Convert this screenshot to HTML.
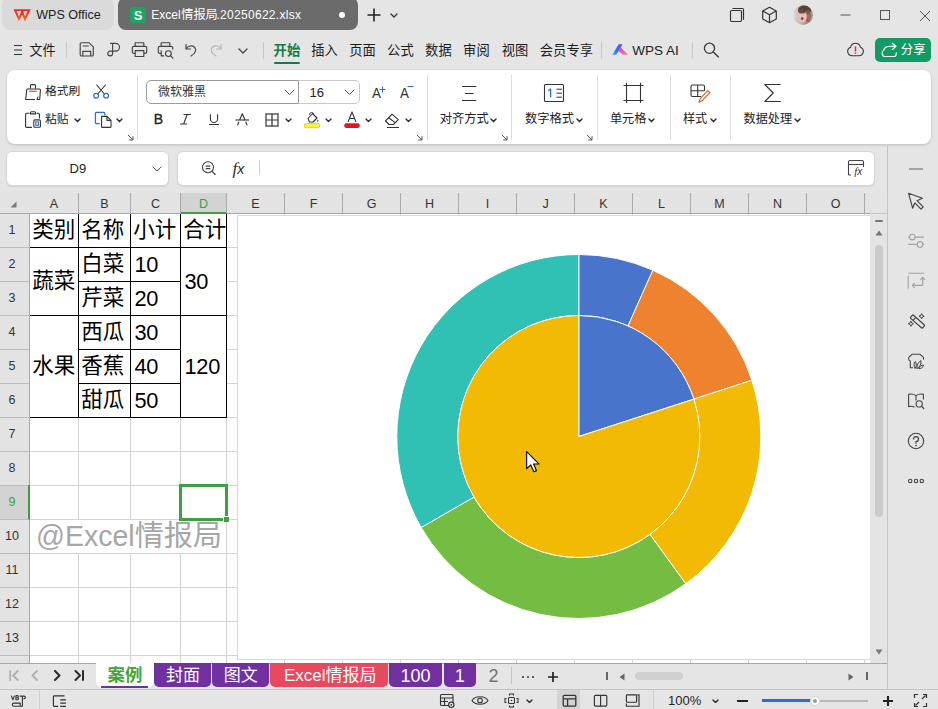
<!DOCTYPE html>
<html lang="zh"><head><meta charset="utf-8"><title>Excel情报局.20250622.xlsx - WPS Office</title>
<style>
html,body{margin:0;padding:0}
body{width:938px;height:709px;overflow:hidden;position:relative;background:#e5e5e5;font-family:"Liberation Sans",sans-serif;color:#222}
body div,body svg{position:absolute;box-sizing:border-box}
span.cj{position:static;display:inline-block;white-space:nowrap;font-family:"Liberation Sans","Noto Sans CJK SC",sans-serif}
span.cji{white-space:nowrap;font-family:"Liberation Sans","Noto Sans CJK SC",sans-serif}
.lat{position:static;display:inline}
</style></head><body>
<div style="left:2px;top:-3px;width:112px;height:33px;background:#dadada;border-radius:8px"></div>
<svg style="left:12px;top:7px;" width="20" height="15" viewBox="0 0 20 15" fill="none"><defs><linearGradient id="wlg" x1="0" y1="0" x2="0" y2="1"><stop offset="0.3" stop-color="#f5281c"/><stop offset="1" stop-color="#f7641a"/></linearGradient></defs><path d="M3 3.1 H11 L6.9 12 Z M9.6 3.1 H17.2 L12.9 12 Z" stroke="url(#wlg)" stroke-width="1.9" stroke-linejoin="miter"/></svg>
<div style="left:36.2px;top:6.725px;height:16.55px;line-height:16.55px;font-size:12.55px;color:#222;white-space:nowrap;">WPS Office</div>
<div style="left:118px;top:-3px;width:240px;height:33px;background:#6b6b6b;border-radius:8px"></div>
<div style="left:130px;top:7px;width:16px;height:16px;background:#21a366;border-radius:2px"></div>
<div style="left:133px;top:6.5px;height:17px;line-height:17px;font-size:13px;color:#fff;white-space:nowrap;font-weight:bold;width:10px;text-align:center">S</div>
<div style="left:151.3px;top:5px;height:20px;line-height:20px;font-size:12px;color:#fff;white-space:nowrap">Excel<span class="cji" style="font-size:12.2px;color:#fff;margin:0 -1.4px 0 0.6px">情报局</span><span style="letter-spacing:0.3px">.20250622.xlsx</span></div>
<div style="left:338.8px;top:11.5px;width:6px;height:6px;background:#fff;border-radius:50%"></div>
<svg style="left:366.7px;top:8px;" width="14" height="14" viewBox="0 0 14 14" fill="none"><path d="M7 0.5 V13.5 M0.5 7 H13.5" stroke="#222" stroke-width="1.6"/></svg>
<svg style="left:390.0px;top:12.5px;" width="8" height="5" viewBox="0 0 8 5" fill="none"><path d="M1 1 L4.0 4 L7 1" stroke="#333" stroke-width="1.3" stroke-linecap="round" stroke-linejoin="round"/></svg>
<svg style="left:728px;top:6px;" width="18" height="18" viewBox="0 0 18 18" fill="none"><rect x="2.5" y="4.5" width="11" height="11" rx="1.2" stroke="#333" stroke-width="1.15"/><path d="M4.5 2.5 H14.5 A1 1 0 0 1 15.5 3.5 V13.8" stroke="#333" stroke-width="1.15"/></svg>
<svg style="left:761px;top:6px;" width="17" height="18" viewBox="0 0 17 18" fill="none"><path d="M8.5 1.3 L15.3 5 V13 L8.5 16.7 L1.7 13 V5 Z M1.9 5.1 L8.5 8.8 L15.1 5.1 M8.5 8.8 V16.5" stroke="#333" stroke-width="1.2" stroke-linejoin="round"/></svg>
<svg style="left:793.3px;top:4.7px" width="20" height="20" viewBox="0 0 20 20"><defs><clipPath id="avc"><circle cx="10" cy="10" r="10"/></clipPath><linearGradient id="avg" x1="0" y1="0" x2="1" y2="0"><stop offset="0" stop-color="#dcdcda"/><stop offset="0.3" stop-color="#cdbdb4"/><stop offset="0.7" stop-color="#b08a7c"/><stop offset="1" stop-color="#9a9a90"/></linearGradient></defs><g clip-path="url(#avc)"><rect width="20" height="20" fill="url(#avg)"/><ellipse cx="11.5" cy="5" rx="6.5" ry="4.5" fill="#5b4036"/><ellipse cx="15" cy="11" rx="2.6" ry="6" fill="#7a5a4e"/><ellipse cx="9.3" cy="11.5" rx="4.6" ry="6" fill="#e2c2b2"/><ellipse cx="9" cy="6.8" rx="3.6" ry="1.8" fill="#6a4a3e"/><ellipse cx="9.2" cy="13.6" rx="1.2" ry="1.6" fill="#b02a3a"/><ellipse cx="15.5" cy="12" rx="1.6" ry="4" fill="#c56a6a" opacity="0.7"/></g></svg>
<svg style="left:839.5px;top:14px;" width="12" height="2" viewBox="0 0 12 2" fill="none"><path d="M0.5 1 H10.5" stroke="#555" stroke-width="1"/></svg>
<svg style="left:879px;top:9px;" width="12" height="12" viewBox="0 0 12 12" fill="none"><rect x="1.5" y="1.5" width="9" height="9" stroke="#555" stroke-width="1"/></svg>
<svg style="left:918.5px;top:9.5px;" width="12" height="12" viewBox="0 0 12 12" fill="none"><path d="M1 1 L11 11 M11 1 L1 11" stroke="#555" stroke-width="1"/></svg>
<svg style="left:13px;top:44px;" width="10" height="12" viewBox="0 0 10 12" fill="none"><path d="M1 1.5 H9 M1 6 H9 M1 10.5 H9" stroke="#333" stroke-width="1.2"/></svg>
<div style="left:29.4px;top:43.6px;line-height:0;"><span class="cj" style="width:26.2px;height:13.1px;line-height:13.1px;font-size:13.1px;color:#1c1c1c">文件</span></div>
<div style="left:66px;top:41.8px;width:1px;height:16.5px;background:#c8c8c8"></div>
<svg style="left:78.3px;top:41.4px;" width="17" height="17" viewBox="0 0 17 17" fill="none"><path d="M2.2 3 A1.3 1.3 0 0 1 3.5 1.7 H11 L15.3 5.8 V13.7 A1.3 1.3 0 0 1 14 15 H3.5 A1.3 1.3 0 0 1 2.2 13.7 Z" stroke="#444" stroke-width="1.15" stroke-linejoin="round"/><path d="M4.8 15 V10.3 H12.7 V15 M4.8 5 H10.8" stroke="#444" stroke-width="1.15"/></svg>
<svg style="left:105px;top:41.4px;" width="17" height="17" viewBox="0 0 17 17" fill="none"><path d="M5.5 2.4 H10.6 A3.85 3.85 0 0 1 10.6 10.1 H5.2 A2.4 2.4 0 1 0 7.6 12.5 V2.4" stroke="#444" stroke-width="1.15" stroke-linecap="round" stroke-linejoin="round"/></svg>
<svg style="left:130.5px;top:41.1px;" width="17" height="17" viewBox="0 0 17 17" fill="none"><path d="M4.2 5.3 V1.7 H12.8 V5.3 M4.2 12.3 H2.8 A1.5 1.5 0 0 1 1.3 10.8 V6.8 A1.5 1.5 0 0 1 2.8 5.3 H14.2 A1.5 1.5 0 0 1 15.7 6.8 V10.8 A1.5 1.5 0 0 1 14.2 12.3 H12.8 M4.2 9.6 H12.8 V15.5 H4.2 Z" stroke="#444" stroke-width="1.15" stroke-linejoin="round"/></svg>
<svg style="left:156.8px;top:41.1px;" width="18" height="18" viewBox="0 0 18 18" fill="none"><path d="M4.2 5.3 V1.7 H12.8 V5.3 M4.6 12.3 H2.8 A1.5 1.5 0 0 1 1.3 10.8 V6.8 A1.5 1.5 0 0 1 2.8 5.3 H14.2 A1.5 1.5 0 0 1 15.7 6.8 V8.4 M4.2 9.6 V14.8 H7.2" stroke="#444" stroke-width="1.15" stroke-linejoin="round"/><circle cx="11.4" cy="12.6" r="2.9" stroke="#444" stroke-width="1.15"/><path d="M13.6 14.8 L15.9 17.1" stroke="#444" stroke-width="1.2" stroke-linecap="round"/></svg>
<svg style="left:184px;top:43px;" width="14" height="14" viewBox="0 0 14 14" fill="none"><path d="M2 1.5 V6 H6.5" stroke="#444" stroke-width="1.2" stroke-linecap="round" stroke-linejoin="round"/><path d="M2.3 5.7 C4 3 8 1.8 10.5 4.2 C13 6.8 11.5 10.5 7 13" stroke="#444" stroke-width="1.2" stroke-linecap="round"/></svg>
<svg style="left:209px;top:43px;" width="14" height="14" viewBox="0 0 14 14" fill="none"><path d="M12 1.5 V6 H7.5" stroke="#b5b5b5" stroke-width="1.2" stroke-linecap="round" stroke-linejoin="round"/><path d="M11.7 5.7 C10 3 6 1.8 3.5 4.2 C1 6.8 2.5 10.5 7 13" stroke="#b5b5b5" stroke-width="1.2" stroke-linecap="round"/></svg>
<svg style="left:237.5px;top:48.0px;" width="10" height="6" viewBox="0 0 10 6" fill="none"><path d="M1 1 L5.0 5 L9 1" stroke="#444" stroke-width="1.3" stroke-linecap="round" stroke-linejoin="round"/></svg>
<div style="left:262.5px;top:42px;width:1px;height:16.5px;background:#c8c8c8"></div>
<div style="left:273.6px;top:44.0px;line-height:0;"><span class="cj" style="width:26.6px;height:13.3px;line-height:13.3px;font-size:13.3px;color:#127d45;font-weight:bold">开始</span></div>
<div style="left:273.5px;top:61.5px;width:26.5px;height:2.2px;background:#127d45;border-radius:1px"></div>
<div style="left:311.3px;top:44.0px;line-height:0;"><span class="cj" style="width:26.6px;height:13.3px;line-height:13.3px;font-size:13.3px;color:#1c1c1c">插入</span></div>
<div style="left:349.3px;top:44.0px;line-height:0;"><span class="cj" style="width:26.6px;height:13.3px;line-height:13.3px;font-size:13.3px;color:#1c1c1c">页面</span></div>
<div style="left:387.1px;top:44.0px;line-height:0;"><span class="cj" style="width:26.6px;height:13.3px;line-height:13.3px;font-size:13.3px;color:#1c1c1c">公式</span></div>
<div style="left:425.1px;top:44.0px;line-height:0;"><span class="cj" style="width:26.6px;height:13.3px;line-height:13.3px;font-size:13.3px;color:#1c1c1c">数据</span></div>
<div style="left:463.1px;top:44.0px;line-height:0;"><span class="cj" style="width:26.6px;height:13.3px;line-height:13.3px;font-size:13.3px;color:#1c1c1c">审阅</span></div>
<div style="left:501.8px;top:44.0px;line-height:0;"><span class="cj" style="width:26.6px;height:13.3px;line-height:13.3px;font-size:13.3px;color:#1c1c1c">视图</span></div>
<div style="left:539.8px;top:44.0px;line-height:0;"><span class="cj" style="width:53.2px;height:13.3px;line-height:13.3px;font-size:13.3px;color:#1c1c1c">会员专享</span></div>
<div style="left:601px;top:41.5px;width:1px;height:16px;background:#c8c8c8"></div>
<svg style="left:610px;top:42px" width="20" height="15" viewBox="610 42 20 15"><defs><linearGradient id="aib" x1="0" y1="1" x2="1" y2="0"><stop offset="0" stop-color="#2fb4ff"/><stop offset="0.45" stop-color="#2f6bff"/><stop offset="1" stop-color="#6a45f5"/></linearGradient><linearGradient id="aip" x1="0" y1="0" x2="1" y2="1"><stop offset="0" stop-color="#d836e6"/><stop offset="1" stop-color="#ff8a78"/></linearGradient></defs><path d="M612.3 54.8 L618.7 44.2 H622.6 L616.2 54.8 Z" fill="url(#aib)"/><path d="M620.6 47.6 L628.2 54.8 H623.2 L618.4 50.9 Z" fill="url(#aip)"/></svg>
<div style="left:632.3px;top:41.65px;height:17.5px;line-height:17.5px;font-size:13.5px;color:#222;white-space:nowrap;">WPS AI</div>
<div style="left:692px;top:41.5px;width:1px;height:16px;background:#c8c8c8"></div>
<svg style="left:702.9px;top:41.4px;" width="17" height="17" viewBox="0 0 17 17" fill="none"><circle cx="6.5" cy="7.3" r="5.1" stroke="#3a3a3a" stroke-width="1.3"/><path d="M10.3 11 L15.4 16" stroke="#3a3a3a" stroke-width="1.3" stroke-linecap="round"/></svg>
<svg style="left:846.5px;top:42.1px;" width="17" height="15" viewBox="0 0 17 15" fill="none"><path d="M8.5 1.2 C11.2 1.2 12.9 3 13.4 5.2 C15.6 6 16.6 7.8 16.3 9.9 C15.9 12.3 14.2 13.7 11.8 13.7 H5.2 C2.8 13.7 1.1 12.3 0.7 9.9 C0.4 7.8 1.4 6 3.6 5.2 C4.1 3 5.8 1.2 8.5 1.2 Z" stroke="#3a3a3a" stroke-width="1.1"/><path d="M8.5 4.4 V9.4" stroke="#e8283c" stroke-width="1.5"/><circle cx="8.5" cy="11" r="0.85" fill="#e8283c"/></svg>
<div style="left:875px;top:38px;width:56px;height:24px;background:#129b64;border-radius:5px"></div>
<svg style="left:880px;top:40px;" width="20" height="20" viewBox="0 0 20 20" fill="none"><path d="M2.3 11.3 V14 A2.5 2.5 0 0 0 4.8 16.5 H13.7 A2.5 2.5 0 0 0 16.2 14 V12.8" stroke="#fff" stroke-width="1.15" stroke-linecap="round"/><path d="M3.7 10.6 C4 7.6 6.6 6.3 9.5 6.3 H15.6 M12.3 3.2 L16 6.3 L12.4 9.5" stroke="#fff" stroke-width="1.15" stroke-linecap="round" stroke-linejoin="round"/></svg>
<div style="left:900.8px;top:43.5px;line-height:0;"><span class="cj" style="width:24.8px;height:12.4px;line-height:12.4px;font-size:12.4px;color:#fff">分享</span></div>
<div style="left:7px;top:69.6px;width:924px;height:74.4px;background:#fff;border-radius:8px;box-shadow:0 1px 3px rgba(0,0,0,0.18)"></div>
<div style="left:137px;top:74.5px;width:1px;height:65px;background:#dcdcdc"></div>
<div style="left:426.5px;top:74.5px;width:1px;height:65px;background:#dcdcdc"></div>
<div style="left:511px;top:74.5px;width:1px;height:65px;background:#dcdcdc"></div>
<div style="left:596.5px;top:74.5px;width:1px;height:65px;background:#dcdcdc"></div>
<div style="left:669.5px;top:74.5px;width:1px;height:65px;background:#dcdcdc"></div>
<div style="left:730px;top:74.5px;width:1px;height:65px;background:#dcdcdc"></div>
<svg style="left:24px;top:83px;" width="18" height="18" viewBox="0 0 18 18" fill="none"><path d="M6.5 5.8 V2.6 A1 1 0 0 1 7.5 1.6 H10.5 A1 1 0 0 1 11.5 2.6 V5.8" stroke="#333" stroke-width="1.1"/><path d="M11 16.5 H1.7 L2.7 6.9 A1 1 0 0 1 3.7 6 H15.4 A1 1 0 0 1 16.4 7.1 L15.7 16.5 H13.2 C13.2 15 13.6 14.2 14.3 13.6" stroke="#333" stroke-width="1.1" stroke-linejoin="round"/><path d="M5.2 8.3 H12.8" stroke="#d9541e" stroke-width="1.2"/></svg>
<div style="left:45px;top:86px;line-height:0;"><span class="cj" style="width:35.4px;height:11.8px;line-height:11.8px;font-size:11.8px;color:#222">格式刷</span></div>
<svg style="left:92px;top:83px;" width="18" height="18" viewBox="0 0 18 18" fill="none"><path d="M4.8 2 L12.4 11 M13.4 2 L5.8 11" stroke="#333" stroke-width="1.1" stroke-linecap="round"/><circle cx="4.1" cy="12.8" r="2.4" stroke="#2b6fd6" stroke-width="1.2"/><circle cx="14.1" cy="12.8" r="2.4" stroke="#2b6fd6" stroke-width="1.2"/></svg>
<svg style="left:24px;top:110px;" width="18" height="19" viewBox="0 0 18 19" fill="none"><path d="M6.4 3.9 V2.8 A1 1 0 0 1 7.4 1.8 H10.6 A1 1 0 0 1 11.6 2.8 V3.9 Z" stroke="#333" stroke-width="1.1" stroke-linejoin="round"/><path d="M5 3.3 H2.6 A1 1 0 0 0 1.6 4.3 V16.4 A1 1 0 0 0 2.6 17.4 H7.6 M13 3.3 H14.4 A1 1 0 0 1 15.4 4.3 V8" stroke="#333" stroke-width="1.1" stroke-linecap="round"/><rect x="9.8" y="9.9" width="6.6" height="7.3" rx="1" stroke="#333" stroke-width="1.1"/><rect x="11.8" y="11.8" width="2.6" height="3.5" stroke="#2b6fd6" stroke-width="1.1"/></svg>
<div style="left:45px;top:113.5px;line-height:0;"><span class="cj" style="width:23.6px;height:11.8px;line-height:11.8px;font-size:11.8px;color:#222">粘贴</span></div>
<svg style="left:73.5px;top:118.2px;" width="7" height="4.6" viewBox="0 0 7 4.6" fill="none"><path d="M1 1 L3.5 3.6 L6 1" stroke="#333" stroke-width="1.5" stroke-linecap="round" stroke-linejoin="round"/></svg>
<svg style="left:94px;top:110px;" width="18" height="19" viewBox="0 0 18 19" fill="none"><path d="M10.8 5.4 V3.4 A1 1 0 0 0 9.8 2.4 H2.4 A1 1 0 0 0 1.4 3.4 V12.5 A1 1 0 0 0 2.4 13.5 H5.8" stroke="#2b6fd6" stroke-width="1.25"/><path d="M7.6 6.4 H13 L17 10.4 V16.4 A1 1 0 0 1 16 17.4 H8.6 A1 1 0 0 1 7.6 16.4 Z M13 6.6 V10.4 H16.8" stroke="#333" stroke-width="1.1" stroke-linejoin="round"/></svg>
<svg style="left:115.5px;top:118.2px;" width="7" height="4.6" viewBox="0 0 7 4.6" fill="none"><path d="M1 1 L3.5 3.6 L6 1" stroke="#333" stroke-width="1.5" stroke-linecap="round" stroke-linejoin="round"/></svg>
<svg style="left:126.5px;top:134.0px;" width="7" height="7" viewBox="0 0 7 7" fill="none"><path d="M1 1 L6 6 M6 2.2 V6 H2.2" stroke="#555" stroke-width="1"/></svg>
<svg style="left:416.0px;top:134.0px;" width="7" height="7" viewBox="0 0 7 7" fill="none"><path d="M1 1 L6 6 M6 2.2 V6 H2.2" stroke="#555" stroke-width="1"/></svg>
<svg style="left:500.5px;top:134.0px;" width="7" height="7" viewBox="0 0 7 7" fill="none"><path d="M1 1 L6 6 M6 2.2 V6 H2.2" stroke="#555" stroke-width="1"/></svg>
<svg style="left:585.5px;top:134.0px;" width="7" height="7" viewBox="0 0 7 7" fill="none"><path d="M1 1 L6 6 M6 2.2 V6 H2.2" stroke="#555" stroke-width="1"/></svg>
<div style="left:146px;top:80px;width:153px;height:24px;border:1px solid #9b9b9b;border-radius:5px 0 0 5px;background:#fff"></div>
<div style="left:298px;top:80px;width:62px;height:24px;border:1px solid #c9c9c9;border-left:1px solid #9b9b9b;border-radius:0 5px 5px 0;background:#fff"></div>
<div style="left:158px;top:86.3px;line-height:0;"><span class="cj" style="width:48px;height:12px;line-height:12px;font-size:12px;color:#333">微软雅黑</span></div>
<svg style="left:283.5px;top:89.25px;" width="11" height="6.5" viewBox="0 0 11 6.5" fill="none"><path d="M1 1 L5.5 5.5 L10 1" stroke="#555" stroke-width="1" stroke-linecap="round" stroke-linejoin="round"/></svg>
<div style="left:309.5px;top:84.0px;height:17px;line-height:17px;font-size:13px;color:#222;white-space:nowrap;">16</div>
<svg style="left:343.5px;top:89.25px;" width="11" height="6.5" viewBox="0 0 11 6.5" fill="none"><path d="M1 1 L5.5 5.5 L10 1" stroke="#555" stroke-width="1" stroke-linecap="round" stroke-linejoin="round"/></svg>
<div style="left:372px;top:83.2px;height:19.2px;line-height:19.2px;font-size:15.2px;color:#333;white-space:nowrap;transform:scaleX(0.88);transform-origin:left">A</div>
<svg style="left:379.4px;top:85.5px;" width="7" height="7" viewBox="0 0 7 7" fill="none"><path d="M3.5 0.5 V6.5 M0.5 3.5 H6.5" stroke="#2b6fd6" stroke-width="1"/></svg>
<div style="left:400.4px;top:83.2px;height:19.2px;line-height:19.2px;font-size:15.2px;color:#333;white-space:nowrap;transform:scaleX(0.88);transform-origin:left">A</div>
<svg style="left:407.2px;top:85.2px;" width="7" height="7" viewBox="0 0 7 7" fill="none"><path d="M0.5 1.5 H6.5" stroke="#2b6fd6" stroke-width="1"/></svg>
<div style="left:152.9px;top:110.3px;height:18px;line-height:18px;font-size:14px;color:#222;white-space:nowrap;-webkit-text-stroke:0.35px #222;width:11px;text-align:center">B</div>
<svg style="left:179px;top:113px;" width="13" height="13" viewBox="0 0 13 13" fill="none"><path d="M4.5 1.5 H11.9 M1 11 H8.2 M8.2 1.5 L4.6 11" stroke="#333" stroke-width="1.1"/></svg>
<svg style="left:207px;top:113px;" width="14" height="13" viewBox="0 0 14 13" fill="none"><path d="M3.4 1.2 V5.9 A3.6 3.6 0 0 0 10.6 5.9 V1.2 M2 11.5 H11.8" stroke="#333" stroke-width="1.1"/></svg>
<svg style="left:235px;top:113px;" width="15" height="14" viewBox="0 0 15 14" fill="none"><path d="M4.6 7 L7.3 0.8 L10 7 M3.9 8.8 L2.5 12.4 M10.7 8.8 L12.1 12.4" stroke="#333" stroke-width="1.1" stroke-linejoin="round"/><path d="M0.6 7 H14" stroke="#333" stroke-width="1.1"/></svg>
<svg style="left:264.5px;top:112.6px;" width="14" height="14" viewBox="0 0 14 14" fill="none"><rect x="1" y="1" width="12" height="12" stroke="#333" stroke-width="1.2"/><path d="M7 1 V13 M1 7 H13" stroke="#333" stroke-width="1.2"/></svg>
<svg style="left:285.0px;top:118.2px;" width="7" height="4.6" viewBox="0 0 7 4.6" fill="none"><path d="M1 1 L3.5 3.6 L6 1" stroke="#333" stroke-width="1.4" stroke-linecap="round" stroke-linejoin="round"/></svg>
<svg style="left:303px;top:110px;" width="18" height="19" viewBox="0 0 18 19" fill="none"><path d="M5 8.5 L9.5 3.5 L14 8 L10 12 H6.5 Z" stroke="#333" stroke-width="1.1" stroke-linejoin="round"/><path d="M6.5 4.8 C6.5 2.2 10 1.5 10.5 4" stroke="#333" stroke-width="1"/><path d="M14.8 9.5 C15.6 10.6 15.6 11.6 14.8 11.9 C14 11.6 14 10.6 14.8 9.5 Z" fill="#333"/><rect x="1.2" y="13.4" width="15.6" height="4.4" rx="2.2" fill="#fff23a" stroke="#d9b800" stroke-width="0.7"/></svg>
<svg style="left:325.0px;top:118.2px;" width="7" height="4.6" viewBox="0 0 7 4.6" fill="none"><path d="M1 1 L3.5 3.6 L6 1" stroke="#333" stroke-width="1.4" stroke-linecap="round" stroke-linejoin="round"/></svg>
<svg style="left:343px;top:110px;" width="18" height="19" viewBox="0 0 18 19" fill="none"><path d="M5 12 L9 2 L13 12 M6.4 8.5 H11.6" stroke="#333" stroke-width="1.1" stroke-linejoin="round"/><rect x="1.2" y="13.3" width="15.6" height="4.6" rx="2.2" fill="#e5141b"/></svg>
<svg style="left:364.5px;top:118.2px;" width="7" height="4.6" viewBox="0 0 7 4.6" fill="none"><path d="M1 1 L3.5 3.6 L6 1" stroke="#333" stroke-width="1.4" stroke-linecap="round" stroke-linejoin="round"/></svg>
<svg style="left:383px;top:112px;" width="18" height="17" viewBox="0 0 18 17" fill="none"><path d="M2.5 9 L9 2.2 L15.3 7.6 L10.5 12.5 H6 Z" stroke="#333" stroke-width="1.1" stroke-linejoin="round"/><path d="M5.5 5.8 L12.3 10.6 M4 15.5 H16" stroke="#333" stroke-width="1.1"/></svg>
<svg style="left:404.5px;top:118.2px;" width="7" height="4.6" viewBox="0 0 7 4.6" fill="none"><path d="M1 1 L3.5 3.6 L6 1" stroke="#333" stroke-width="1.4" stroke-linecap="round" stroke-linejoin="round"/></svg>
<svg style="left:461px;top:85px;" width="17" height="17" viewBox="0 0 17 17" fill="none"><path d="M1 1.5 H15.3 M3.8 8.5 H12.5 M1 15.5 H15.3" stroke="#333" stroke-width="1.05"/></svg>
<div style="left:439.8px;top:113.4px;line-height:0;"><span class="cj" style="width:49px;height:12.25px;line-height:12.25px;font-size:12.25px;color:#222">对齐方式</span></div>
<svg style="left:490.1px;top:118.2px;" width="7" height="4.6" viewBox="0 0 7 4.6" fill="none"><path d="M1 1 L3.5 3.6 L6 1" stroke="#333" stroke-width="1.5" stroke-linecap="round" stroke-linejoin="round"/></svg>
<svg style="left:543px;top:83px;" width="22" height="20" viewBox="0 0 22 20" fill="none"><rect x="1.5" y="1.5" width="19" height="17" rx="1" stroke="#333" stroke-width="1.1"/><path d="M13.4 6.2 H19 M13.4 10.2 H19 M13.4 14.2 H19" stroke="#333" stroke-width="1"/><path d="M5.2 7.6 L7.6 6 V14.6" stroke="#2b6fd6" stroke-width="1.3" stroke-linejoin="round"/></svg>
<div style="left:525px;top:113.4px;line-height:0;"><span class="cj" style="width:49px;height:12.25px;line-height:12.25px;font-size:12.25px;color:#222">数字格式</span></div>
<svg style="left:575.5px;top:118.2px;" width="7" height="4.6" viewBox="0 0 7 4.6" fill="none"><path d="M1 1 L3.5 3.6 L6 1" stroke="#333" stroke-width="1.5" stroke-linecap="round" stroke-linejoin="round"/></svg>
<svg style="left:622px;top:82px;" width="22" height="22" viewBox="0 0 22 22" fill="none"><path d="M4.5 0.7 V20.9 M18.5 0.7 V20.9 M1.5 3.5 H21.5 M1.5 18.5 H21.5" stroke="#333" stroke-width="1.1"/></svg>
<div style="left:609.9px;top:113.4px;line-height:0;"><span class="cj" style="width:36.45px;height:12.15px;line-height:12.15px;font-size:12.15px;color:#222">单元格</span></div>
<svg style="left:648.3px;top:118.2px;" width="7" height="4.6" viewBox="0 0 7 4.6" fill="none"><path d="M1 1 L3.5 3.6 L6 1" stroke="#333" stroke-width="1.5" stroke-linecap="round" stroke-linejoin="round"/></svg>
<svg style="left:688.8px;top:83.2px;" width="22" height="21" viewBox="0 0 22 21" fill="none"><path d="M12 13.5 H3.5 A1.5 1.5 0 0 1 2 12 V3.5 A1.5 1.5 0 0 1 3.5 2 H14 A1.5 1.5 0 0 1 15.5 3.5 V8 M2 7.8 H15.5 M8.7 2 V13.5" stroke="#333" stroke-width="1.1"/><path d="M18.8 7.6 L20.8 9.6 L13.3 17.6 L10 19.2 L11.2 15.6 Z" stroke="#dd5a1e" stroke-width="1.1" stroke-linejoin="round"/></svg>
<div style="left:682.9px;top:113.4px;line-height:0;"><span class="cj" style="width:24.3px;height:12.15px;line-height:12.15px;font-size:12.15px;color:#222">样式</span></div>
<svg style="left:709.7px;top:118.2px;" width="7" height="4.6" viewBox="0 0 7 4.6" fill="none"><path d="M1 1 L3.5 3.6 L6 1" stroke="#333" stroke-width="1.5" stroke-linecap="round" stroke-linejoin="round"/></svg>
<svg style="left:763px;top:82px;" width="20" height="21" viewBox="0 0 20 21" fill="none"><path d="M17.6 2.5 H1.8 L10.2 11 L1.8 19.5 H17.8" stroke="#333" stroke-width="1.1" stroke-linejoin="round"/></svg>
<div style="left:743.6px;top:113.4px;line-height:0;"><span class="cj" style="width:48.6px;height:12.15px;line-height:12.15px;font-size:12.15px;color:#222">数据处理</span></div>
<svg style="left:794.3px;top:118.2px;" width="7" height="4.6" viewBox="0 0 7 4.6" fill="none"><path d="M1 1 L3.5 3.6 L6 1" stroke="#333" stroke-width="1.5" stroke-linecap="round" stroke-linejoin="round"/></svg>
<div style="left:6.2px;top:151.2px;width:163px;height:34.4px;background:#fff;border-radius:6px;border:1px solid #d6d6d6;box-shadow:0 1px 1px rgba(0,0,0,0.08)"></div>
<div style="left:176.6px;top:151.2px;width:698px;height:34.4px;background:#fff;border-radius:6px;border:1px solid #d6d6d6;box-shadow:0 1px 1px rgba(0,0,0,0.08)"></div>
<div style="left:69.5px;top:160.0px;height:17px;line-height:17px;font-size:13px;color:#222;white-space:nowrap;">D9</div>
<svg style="left:151.5px;top:166.0px;" width="10" height="6" viewBox="0 0 10 6" fill="none"><path d="M1 1 L5.0 5 L9 1" stroke="#555" stroke-width="1" stroke-linecap="round" stroke-linejoin="round"/></svg>
<svg style="left:201px;top:160px;" width="17" height="17" viewBox="0 0 17 17" fill="none"><circle cx="7" cy="7.3" r="5.5" stroke="#3a3a3a" stroke-width="1.05"/><path d="M4.7 6.1 H9.3 M4.7 8.6 H9.3" stroke="#3a3a3a" stroke-width="1.05"/><path d="M11.1 11.4 L14.2 14.5" stroke="#3a3a3a" stroke-width="1.15" stroke-linecap="round"/></svg>
<div style="left:232.6px;top:158.5px;height:20px;line-height:20px;font-size:17px;color:#2e2e2e;font-family:'Liberation Serif',serif;font-style:italic;white-space:nowrap">f<span style="font-size:14px;font-family:'Liberation Sans',sans-serif;">x</span></div>
<div style="left:259px;top:160px;width:1px;height:15px;background:#d0d0d0"></div>
<svg style="left:847px;top:159px;" width="18" height="18" viewBox="0 0 18 18" fill="none"><path d="M1.5 16 V3 A1.5 1.5 0 0 1 3 1.5 H15 A1.5 1.5 0 0 1 16.5 3 V8 M1.5 5.5 H16.5 M1.5 16 H4" stroke="#444" stroke-width="1.1"/></svg>
<div style="left:854.2px;top:165px;height:13px;line-height:13px;font-size:11px;color:#333;font-family:'Liberation Serif',serif;font-style:italic;white-space:nowrap">f<span style="font-size:10px;font-family:'Liberation Sans',sans-serif;">x</span></div>
<div style="left:0px;top:193px;width:887px;height:470px;background:#fff"></div>
<div style="left:0px;top:193px;width:887px;height:20px;background:#e3e3e3"></div>
<div style="left:0px;top:213px;width:870px;height:1px;background:#a8a8a8"></div>
<div style="left:0px;top:214px;width:29px;height:449px;background:#e3e3e3"></div>
<div style="left:29px;top:213px;width:1px;height:450px;background:#a8a8a8"></div>
<svg style="left:9.5px;top:200.5px;" width="7" height="7" viewBox="0 0 7 7" fill="none"><path d="M6.5 0.5 V6.5 H0.5 Z" fill="#7a7a7a"/></svg>
<div style="left:30px;top:195.85px;height:16.5px;line-height:16.5px;font-size:12.5px;color:#333;white-space:nowrap;width:48px;text-align:center">A</div>
<div style="left:79px;top:195.85px;height:16.5px;line-height:16.5px;font-size:12.5px;color:#333;white-space:nowrap;width:51px;text-align:center">B</div>
<div style="left:131px;top:195.85px;height:16.5px;line-height:16.5px;font-size:12.5px;color:#333;white-space:nowrap;width:49px;text-align:center">C</div>
<div style="left:181px;top:193px;width:45px;height:20px;background:#d3d3d3"></div>
<div style="left:181px;top:212px;width:46px;height:2px;background:#3da142"></div>
<div style="left:181px;top:195.85px;height:16.5px;line-height:16.5px;font-size:12.5px;color:#3da142;white-space:nowrap;width:45px;text-align:center">D</div>
<div style="left:227px;top:195.85px;height:16.5px;line-height:16.5px;font-size:12.5px;color:#333;white-space:nowrap;width:57px;text-align:center">E</div>
<div style="left:285px;top:195.85px;height:16.5px;line-height:16.5px;font-size:12.5px;color:#333;white-space:nowrap;width:57px;text-align:center">F</div>
<div style="left:343px;top:195.85px;height:16.5px;line-height:16.5px;font-size:12.5px;color:#333;white-space:nowrap;width:57px;text-align:center">G</div>
<div style="left:401px;top:195.85px;height:16.5px;line-height:16.5px;font-size:12.5px;color:#333;white-space:nowrap;width:57px;text-align:center">H</div>
<div style="left:459px;top:195.85px;height:16.5px;line-height:16.5px;font-size:12.5px;color:#333;white-space:nowrap;width:57px;text-align:center">I</div>
<div style="left:517px;top:195.85px;height:16.5px;line-height:16.5px;font-size:12.5px;color:#333;white-space:nowrap;width:57px;text-align:center">J</div>
<div style="left:575px;top:195.85px;height:16.5px;line-height:16.5px;font-size:12.5px;color:#333;white-space:nowrap;width:57px;text-align:center">K</div>
<div style="left:633px;top:195.85px;height:16.5px;line-height:16.5px;font-size:12.5px;color:#333;white-space:nowrap;width:57px;text-align:center">L</div>
<div style="left:691px;top:195.85px;height:16.5px;line-height:16.5px;font-size:12.5px;color:#333;white-space:nowrap;width:57px;text-align:center">M</div>
<div style="left:749px;top:195.85px;height:16.5px;line-height:16.5px;font-size:12.5px;color:#333;white-space:nowrap;width:57px;text-align:center">N</div>
<div style="left:807px;top:195.85px;height:16.5px;line-height:16.5px;font-size:12.5px;color:#333;white-space:nowrap;width:57px;text-align:center">O</div>
<div style="left:78px;top:193px;width:1px;height:20px;background:#a8a8a8"></div>
<div style="left:130px;top:193px;width:1px;height:20px;background:#a8a8a8"></div>
<div style="left:180px;top:193px;width:1px;height:20px;background:#a8a8a8"></div>
<div style="left:226px;top:193px;width:1px;height:20px;background:#a8a8a8"></div>
<div style="left:284px;top:193px;width:1px;height:20px;background:#a8a8a8"></div>
<div style="left:342px;top:193px;width:1px;height:20px;background:#a8a8a8"></div>
<div style="left:400px;top:193px;width:1px;height:20px;background:#a8a8a8"></div>
<div style="left:458px;top:193px;width:1px;height:20px;background:#a8a8a8"></div>
<div style="left:516px;top:193px;width:1px;height:20px;background:#a8a8a8"></div>
<div style="left:574px;top:193px;width:1px;height:20px;background:#a8a8a8"></div>
<div style="left:632px;top:193px;width:1px;height:20px;background:#a8a8a8"></div>
<div style="left:690px;top:193px;width:1px;height:20px;background:#a8a8a8"></div>
<div style="left:748px;top:193px;width:1px;height:20px;background:#a8a8a8"></div>
<div style="left:806px;top:193px;width:1px;height:20px;background:#a8a8a8"></div>
<div style="left:864px;top:193px;width:1px;height:20px;background:#a8a8a8"></div>
<div style="left:0px;top:222.05px;height:16.5px;line-height:16.5px;font-size:12.5px;color:#333;white-space:nowrap;width:24px;text-align:center">1</div>
<div style="left:0px;top:247px;width:29px;height:1px;background:#bcbcbc"></div>
<div style="left:0px;top:256.05px;height:16.5px;line-height:16.5px;font-size:12.5px;color:#333;white-space:nowrap;width:24px;text-align:center">2</div>
<div style="left:0px;top:281px;width:29px;height:1px;background:#bcbcbc"></div>
<div style="left:0px;top:290.05px;height:16.5px;line-height:16.5px;font-size:12.5px;color:#333;white-space:nowrap;width:24px;text-align:center">3</div>
<div style="left:0px;top:315px;width:29px;height:1px;background:#bcbcbc"></div>
<div style="left:0px;top:324.05px;height:16.5px;line-height:16.5px;font-size:12.5px;color:#333;white-space:nowrap;width:24px;text-align:center">4</div>
<div style="left:0px;top:349px;width:29px;height:1px;background:#bcbcbc"></div>
<div style="left:0px;top:358.05px;height:16.5px;line-height:16.5px;font-size:12.5px;color:#333;white-space:nowrap;width:24px;text-align:center">5</div>
<div style="left:0px;top:383px;width:29px;height:1px;background:#bcbcbc"></div>
<div style="left:0px;top:392.05px;height:16.5px;line-height:16.5px;font-size:12.5px;color:#333;white-space:nowrap;width:24px;text-align:center">6</div>
<div style="left:0px;top:417px;width:29px;height:1px;background:#bcbcbc"></div>
<div style="left:0px;top:426.05px;height:16.5px;line-height:16.5px;font-size:12.5px;color:#333;white-space:nowrap;width:24px;text-align:center">7</div>
<div style="left:0px;top:451px;width:29px;height:1px;background:#bcbcbc"></div>
<div style="left:0px;top:460.05px;height:16.5px;line-height:16.5px;font-size:12.5px;color:#333;white-space:nowrap;width:24px;text-align:center">8</div>
<div style="left:0px;top:485px;width:29px;height:1px;background:#bcbcbc"></div>
<div style="left:0px;top:486px;width:29px;height:33px;background:#d3d3d3"></div>
<div style="left:28px;top:485px;width:2px;height:35px;background:#3da142"></div>
<div style="left:0px;top:494.05px;height:16.5px;line-height:16.5px;font-size:12.5px;color:#3da142;white-space:nowrap;width:24px;text-align:center">9</div>
<div style="left:0px;top:519px;width:29px;height:1px;background:#bcbcbc"></div>
<div style="left:0px;top:528.05px;height:16.5px;line-height:16.5px;font-size:12.5px;color:#333;white-space:nowrap;width:24px;text-align:center">10</div>
<div style="left:0px;top:553px;width:29px;height:1px;background:#bcbcbc"></div>
<div style="left:0px;top:562.05px;height:16.5px;line-height:16.5px;font-size:12.5px;color:#333;white-space:nowrap;width:24px;text-align:center">11</div>
<div style="left:0px;top:587px;width:29px;height:1px;background:#bcbcbc"></div>
<div style="left:0px;top:596.05px;height:16.5px;line-height:16.5px;font-size:12.5px;color:#333;white-space:nowrap;width:24px;text-align:center">12</div>
<div style="left:0px;top:621px;width:29px;height:1px;background:#bcbcbc"></div>
<div style="left:0px;top:630.05px;height:16.5px;line-height:16.5px;font-size:12.5px;color:#333;white-space:nowrap;width:24px;text-align:center">13</div>
<div style="left:0px;top:655px;width:29px;height:1px;background:#bcbcbc"></div>
<div style="left:30px;top:247px;width:840px;height:1px;background:#d4d4d4"></div>
<div style="left:30px;top:281px;width:840px;height:1px;background:#d4d4d4"></div>
<div style="left:30px;top:315px;width:840px;height:1px;background:#d4d4d4"></div>
<div style="left:30px;top:349px;width:840px;height:1px;background:#d4d4d4"></div>
<div style="left:30px;top:383px;width:840px;height:1px;background:#d4d4d4"></div>
<div style="left:30px;top:417px;width:840px;height:1px;background:#d4d4d4"></div>
<div style="left:30px;top:451px;width:840px;height:1px;background:#d4d4d4"></div>
<div style="left:30px;top:485px;width:840px;height:1px;background:#d4d4d4"></div>
<div style="left:30px;top:519px;width:840px;height:1px;background:#d4d4d4"></div>
<div style="left:30px;top:553px;width:840px;height:1px;background:#d4d4d4"></div>
<div style="left:30px;top:587px;width:840px;height:1px;background:#d4d4d4"></div>
<div style="left:30px;top:621px;width:840px;height:1px;background:#d4d4d4"></div>
<div style="left:30px;top:655px;width:840px;height:1px;background:#d4d4d4"></div>
<div style="left:78px;top:214px;width:1px;height:305px;background:#d4d4d4"></div>
<div style="left:78px;top:554px;width:1px;height:109px;background:#d4d4d4"></div>
<div style="left:130px;top:214px;width:1px;height:305px;background:#d4d4d4"></div>
<div style="left:130px;top:554px;width:1px;height:109px;background:#d4d4d4"></div>
<div style="left:180px;top:214px;width:1px;height:305px;background:#d4d4d4"></div>
<div style="left:180px;top:554px;width:1px;height:109px;background:#d4d4d4"></div>
<div style="left:226px;top:214px;width:1px;height:449px;background:#d4d4d4"></div>
<div style="left:284px;top:214px;width:1px;height:449px;background:#d4d4d4"></div>
<div style="left:342px;top:214px;width:1px;height:449px;background:#d4d4d4"></div>
<div style="left:400px;top:214px;width:1px;height:449px;background:#d4d4d4"></div>
<div style="left:458px;top:214px;width:1px;height:449px;background:#d4d4d4"></div>
<div style="left:516px;top:214px;width:1px;height:449px;background:#d4d4d4"></div>
<div style="left:574px;top:214px;width:1px;height:449px;background:#d4d4d4"></div>
<div style="left:632px;top:214px;width:1px;height:449px;background:#d4d4d4"></div>
<div style="left:690px;top:214px;width:1px;height:449px;background:#d4d4d4"></div>
<div style="left:748px;top:214px;width:1px;height:449px;background:#d4d4d4"></div>
<div style="left:806px;top:214px;width:1px;height:449px;background:#d4d4d4"></div>
<div style="left:864px;top:214px;width:1px;height:449px;background:#d4d4d4"></div>
<div style="left:30px;top:248px;width:48px;height:67px;background:#fff"></div>
<div style="left:30px;top:316px;width:48px;height:101px;background:#fff"></div>
<div style="left:181px;top:248px;width:45px;height:67px;background:#fff"></div>
<div style="left:181px;top:316px;width:45px;height:101px;background:#fff"></div>
<div style="left:30px;top:247px;width:197px;height:1px;background:#000"></div>
<div style="left:30px;top:315px;width:197px;height:1px;background:#000"></div>
<div style="left:30px;top:417px;width:197px;height:1px;background:#000"></div>
<div style="left:78px;top:281px;width:103px;height:1px;background:#000"></div>
<div style="left:78px;top:349px;width:103px;height:1px;background:#000"></div>
<div style="left:78px;top:383px;width:103px;height:1px;background:#000"></div>
<div style="left:78px;top:214px;width:1px;height:204px;background:#000"></div>
<div style="left:130px;top:214px;width:1px;height:204px;background:#000"></div>
<div style="left:180px;top:214px;width:1px;height:204px;background:#000"></div>
<div style="left:226px;top:214px;width:1px;height:204px;background:#000"></div>
<div style="left:32.2px;top:219.75px;line-height:0;"><span class="cj" style="width:43px;height:21.5px;line-height:21.5px;font-size:21.5px;color:#000">类别</span></div>
<div style="left:81.2px;top:219.75px;line-height:0;"><span class="cj" style="width:43px;height:21.5px;line-height:21.5px;font-size:21.5px;color:#000">名称</span></div>
<div style="left:133.2px;top:219.75px;line-height:0;"><span class="cj" style="width:43px;height:21.5px;line-height:21.5px;font-size:21.5px;color:#000">小计</span></div>
<div style="left:183.2px;top:219.75px;line-height:0;"><span class="cj" style="width:43px;height:21.5px;line-height:21.5px;font-size:21.5px;color:#000">合计</span></div>
<div style="left:32.2px;top:270.75px;line-height:0;"><span class="cj" style="width:43px;height:21.5px;line-height:21.5px;font-size:21.5px;color:#000">蔬菜</span></div>
<div style="left:32.2px;top:355.75px;line-height:0;"><span class="cj" style="width:43px;height:21.5px;line-height:21.5px;font-size:21.5px;color:#000">水果</span></div>
<div style="left:81.2px;top:253.75px;line-height:0;"><span class="cj" style="width:43px;height:21.5px;line-height:21.5px;font-size:21.5px;color:#000">白菜</span></div>
<div style="left:81.2px;top:287.75px;line-height:0;"><span class="cj" style="width:43px;height:21.5px;line-height:21.5px;font-size:21.5px;color:#000">芹菜</span></div>
<div style="left:81.2px;top:321.75px;line-height:0;"><span class="cj" style="width:43px;height:21.5px;line-height:21.5px;font-size:21.5px;color:#000">西瓜</span></div>
<div style="left:81.2px;top:355.75px;line-height:0;"><span class="cj" style="width:43px;height:21.5px;line-height:21.5px;font-size:21.5px;color:#000">香蕉</span></div>
<div style="left:81.2px;top:389.75px;line-height:0;"><span class="cj" style="width:43px;height:21.5px;line-height:21.5px;font-size:21.5px;color:#000">甜瓜</span></div>
<div style="left:134.5px;top:251.7px;height:26px;line-height:26px;font-size:21.8px;color:#000;white-space:nowrap;letter-spacing:-0.3px">10</div>
<div style="left:134.5px;top:285.7px;height:26px;line-height:26px;font-size:21.8px;color:#000;white-space:nowrap;letter-spacing:-0.3px">20</div>
<div style="left:134.5px;top:319.7px;height:26px;line-height:26px;font-size:21.8px;color:#000;white-space:nowrap;letter-spacing:-0.3px">30</div>
<div style="left:134.5px;top:353.7px;height:26px;line-height:26px;font-size:21.8px;color:#000;white-space:nowrap;letter-spacing:-0.3px">40</div>
<div style="left:134.5px;top:387.7px;height:26px;line-height:26px;font-size:21.8px;color:#000;white-space:nowrap;letter-spacing:-0.3px">50</div>
<div style="left:184.5px;top:268.7px;height:26px;line-height:26px;font-size:21.8px;color:#000;white-space:nowrap;letter-spacing:-0.3px">30</div>
<div style="left:184.5px;top:353.7px;height:26px;line-height:26px;font-size:21.8px;color:#000;white-space:nowrap;letter-spacing:-0.3px">120</div>
<div style="left:179px;top:484px;width:49px;height:37px;border:3px solid #3da142"></div>
<div style="left:223px;top:516px;width:6px;height:6px;background:#3da142;border-left:1px solid #fff;border-top:1px solid #fff"></div>
<div style="left:35.8px;top:519.2px;height:34px;line-height:34px;font-size:30.1px;color:#a6a6a6;white-space:nowrap;transform:scaleX(0.947);transform-origin:left center">@Excel</div>
<div style="left:134.7px;top:521.9px;line-height:0;"><span class="cj" style="width:87.3px;height:29.1px;line-height:29.1px;font-size:29.1px;color:#a6a6a6">情报局</span></div>
<div style="left:237px;top:215px;width:640px;height:445px;background:#fff;border:1px solid #d9d9d9"></div>
<div style="left:870px;top:193px;width:17px;height:470px;background:#e4e4e4"></div>
<svg style="left:0;top:0" width="938" height="709" viewBox="0 0 938 709"><path d="M578.80 315.50 L578.80 254.50 A182 182 0 0 1 652.83 270.23 L628.02 325.96 A121 121 0 0 0 578.80 315.50 Z" fill="#4874cb" stroke="#fff" stroke-width="1" stroke-linejoin="round"/><path d="M628.02 325.96 L652.83 270.23 A182 182 0 0 1 751.89 380.26 L693.88 399.11 A121 121 0 0 0 628.02 325.96 Z" fill="#ee822f" stroke="#fff" stroke-width="1" stroke-linejoin="round"/><path d="M693.88 399.11 L751.89 380.26 A182 182 0 0 1 685.78 583.74 L649.92 534.39 A121 121 0 0 0 693.88 399.11 Z" fill="#f2ba02" stroke="#fff" stroke-width="1" stroke-linejoin="round"/><path d="M649.92 534.39 L685.78 583.74 A182 182 0 0 1 421.18 527.50 L474.01 497.00 A121 121 0 0 0 649.92 534.39 Z" fill="#75bd42" stroke="#fff" stroke-width="1" stroke-linejoin="round"/><path d="M474.01 497.00 L421.18 527.50 A182 182 0 0 1 578.80 254.50 L578.80 315.50 A121 121 0 0 0 474.01 497.00 Z" fill="#30c0b4" stroke="#fff" stroke-width="1" stroke-linejoin="round"/><path d="M578.80 436.50 L578.80 315.50 A121 121 0 0 1 693.88 399.11 Z" fill="#4874cb" stroke="#fff" stroke-width="1" stroke-linejoin="round"/><path d="M578.80 436.50 L693.88 399.11 A121 121 0 1 1 578.80 315.50 Z" fill="#f2ba02" stroke="#fff" stroke-width="1" stroke-linejoin="round"/></svg>
<svg style="left:524.8px;top:449.8px;" width="16.5" height="24.2" viewBox="0 0 15 22" fill="none"><path d="M1.5 1.5 V17 L5.3 13.6 L8 19.8 L10.4 18.8 L7.8 12.8 H12.8 Z" fill="#fff" stroke="#000" stroke-width="1" stroke-linejoin="round"/></svg>
<div style="left:875px;top:220px;width:8px;height:2px;background:#777;border-radius:1px"></div>
<div style="left:870px;top:213px;width:17px;height:1px;background:#c8c8c8"></div>
<svg style="left:875px;top:230px;" width="8" height="6" viewBox="0 0 8 6" fill="none"><path d="M4 0.5 L7.5 5.5 H0.5 Z" fill="#777"/></svg>
<div style="left:875px;top:245px;width:8px;height:272px;background:#cbcbcb;border-radius:4px"></div>
<svg style="left:875px;top:649px;" width="8" height="6" viewBox="0 0 8 6" fill="none"><path d="M4 5.5 L7.5 0.5 H0.5 Z" fill="#777"/></svg>
<div style="left:887px;top:145px;width:1px;height:544px;background:#c4c4c4"></div>
<div style="left:909.3px;top:168px;width:13.4px;height:1.6px;background:#a3a3a3"></div>
<svg style="left:906px;top:191px;" width="20" height="20" viewBox="0 0 20 20" fill="none"><path d="M2.6 2.3 L16.4 7.3 L11 9.7 L17.2 15.9 L15 18.1 L8.8 11.9 L6.6 17.2 Z" stroke="#444" stroke-width="1.2" stroke-linejoin="round"/></svg>
<svg style="left:906px;top:231px;" width="20" height="20" viewBox="0 0 20 20" fill="none"><path d="M2.2 6.1 H3.5 M9.1 6.1 H18 M2.2 13.4 H11.2 M16.8 13.4 H18" stroke="#a3a3a3" stroke-width="1.1"/><circle cx="6.3" cy="6.1" r="2.8" stroke="#a3a3a3" stroke-width="1.1"/><circle cx="14" cy="13.4" r="2.8" stroke="#a3a3a3" stroke-width="1.1"/></svg>
<svg style="left:906px;top:271px;" width="20" height="20" viewBox="0 0 20 20" fill="none"><path d="M2.2 2.3 H18 M2.2 4.5 V17.8" stroke="#a3a3a3" stroke-width="1.1"/><path d="M16.7 6.6 V14.4 H6.3 M14.4 8.9 L16.7 6.4 L19 8.9 M8.8 12 L6.2 14.4 L8.8 16.8" stroke="#a3a3a3" stroke-width="1.1" stroke-linejoin="round"/></svg>
<svg style="left:906px;top:311px;" width="20" height="20" viewBox="0 0 20 20" fill="none"><g transform="rotate(41.5 11.45 10.55)"><rect x="3.4" y="8.5" width="16.1" height="4.1" rx="0.9" stroke="#444" stroke-width="1.2"/><path d="M7.4 8.5 V12.6" stroke="#444" stroke-width="1.1"/></g><path d="M15.6 2.6 L16.4 4.4 L18.2 5.2 L16.4 6 L15.6 7.8 L14.8 6 L13 5.2 L14.8 4.4 Z M4.9 10.1 L5.7 11.9 L7.5 12.7 L5.7 13.5 L4.9 15.3 L4.1 13.5 L2.3 12.7 L4.1 11.9 Z" stroke="#444" stroke-width="1" stroke-linejoin="round"/></svg>
<svg style="left:906px;top:351px;" width="20" height="20" viewBox="0 0 20 20" fill="none"><path d="M7 16.8 H4.3 V10 C2 9.6 1.8 5.8 4.6 4.8 L6.2 3.2 H13.8 L15.6 4.8 C17.6 5.6 17.8 7.6 17.2 8.6" stroke="#444" stroke-width="1.1" stroke-linejoin="round"/><path d="M9 17.5 C7.6 15 8 12 9.2 10.4 C10.6 12.2 10.8 15.2 9 17.5 Z M10.8 17.6 C10.6 14 12.6 10.6 15 9.6 C15.4 12.8 14 16.2 10.8 17.6 Z M12.6 17.6 C13.4 15.6 15.6 14 17.6 14.2 C17 16.6 15 17.8 12.6 17.6 Z" stroke="#444" stroke-width="1" stroke-linejoin="round"/></svg>
<svg style="left:906px;top:391px;" width="20" height="20" viewBox="0 0 20 20" fill="none"><path d="M10 4.6 C8 3.2 5 2.8 2.6 3.4 V15.6 C4.6 15.1 7 15.4 8.6 16.3 M10 4.6 C12 3.2 15 2.8 17.4 3.4 V8.4 M10 4.6 V9.4" stroke="#444" stroke-width="1.1" stroke-linejoin="round"/><circle cx="13.2" cy="12.9" r="3.1" stroke="#444" stroke-width="1.1"/><path d="M15.5 15.2 L17.8 17.5" stroke="#444" stroke-width="1.2" stroke-linecap="round"/></svg>
<svg style="left:906px;top:431px;" width="20" height="20" viewBox="0 0 20 20" fill="none"><circle cx="10" cy="10" r="7.7" stroke="#444" stroke-width="1.1"/><path d="M7.5 8 A2.5 2.5 0 1 1 10 10.6 V12.2" stroke="#444" stroke-width="1.2" stroke-linecap="round"/><circle cx="10" cy="14.5" r="0.85" fill="#444"/></svg>
<svg style="left:906px;top:471px;" width="20" height="20" viewBox="0 0 20 20" fill="none"><circle cx="4.2" cy="10" r="1.7" stroke="#444" stroke-width="1.1"/><circle cx="10" cy="10" r="1.7" stroke="#444" stroke-width="1.1"/><circle cx="15.8" cy="10" r="1.7" stroke="#444" stroke-width="1.1"/></svg>
<div style="left:0px;top:663px;width:887px;height:26px;background:#e5e5e5;border-top:1px solid #a8a8a8"></div>
<div style="left:0px;top:689px;width:938px;height:1px;background:#c4c4c4"></div>
<svg style="left:8.5px;top:669.8px;" width="10" height="11" viewBox="0 0 10 11" fill="none"><path d="M1.2 1 V10 M8.7 1 L4.2 5.5 L8.7 10" stroke="#b0b0b0" stroke-width="1.8" stroke-linecap="round" stroke-linejoin="round"/></svg>
<svg style="left:29.5px;top:669.8px;" width="10" height="11" viewBox="0 0 10 11" fill="none"><path d="M7 1 L2.5 5.5 L7 10" stroke="#b0b0b0" stroke-width="1.8" stroke-linecap="round" stroke-linejoin="round"/></svg>
<svg style="left:52px;top:669.8px;" width="10" height="11" viewBox="0 0 10 11" fill="none"><path d="M3 1 L7.5 5.5 L3 10" stroke="#2a2a2a" stroke-width="2" stroke-linecap="round" stroke-linejoin="round"/></svg>
<svg style="left:73.5px;top:669.8px;" width="10" height="11" viewBox="0 0 10 11" fill="none"><path d="M9 1 V10 M1.5 1 L6 5.5 L1.5 10" stroke="#2a2a2a" stroke-width="2" stroke-linecap="round" stroke-linejoin="round"/></svg>
<div style="left:95.5px;top:663px;width:58.2px;height:24.7px;background:#fff;border-radius:0 0 7px 7px"></div>
<div style="left:107.6px;top:667.4px;line-height:0;"><span class="cj" style="width:34.8px;height:17.4px;line-height:17.4px;font-size:17.4px;color:#42a436;font-weight:bold">案例</span></div>
<div style="left:101px;top:686px;width:47px;height:1.8px;background:#7030a0"></div>
<div style="left:153.7px;top:663px;width:57.30000000000001px;height:24px;background:#7030a0;border-radius:0 0 5px 5px"></div>
<div style="left:166px;top:667px;line-height:0;"><span class="cj" style="width:34px;height:17px;line-height:17px;font-size:17px;color:#fff">封面</span></div>
<div style="left:212.2px;top:663px;width:56.60000000000002px;height:24px;background:#7030a0;border-radius:0 0 5px 5px"></div>
<div style="left:223.7px;top:667px;line-height:0;"><span class="cj" style="width:34px;height:17px;line-height:17px;font-size:17px;color:#fff">图文</span></div>
<div style="left:270.2px;top:663px;width:117.40000000000003px;height:24px;background:#e8495e;border-radius:0 0 5px 5px"></div>
<div style="left:284px;top:665px;height:22px;line-height:22px;font-size:17px;color:#fff;white-space:nowrap">Excel<span class="cji" style="font-size:17px;color:#fff">情报局</span></div>
<div style="left:389px;top:663px;width:53px;height:24px;background:#7030a0;border-radius:0 0 5px 5px"></div>
<div style="left:389px;top:664.5px;height:22px;line-height:22px;font-size:18px;color:#fff;white-space:nowrap;width:53px;text-align:center">100</div>
<div style="left:443.5px;top:663px;width:32.5px;height:24px;background:#7030a0;border-radius:0 0 5px 5px"></div>
<div style="left:443.5px;top:664.5px;height:22px;line-height:22px;font-size:18px;color:#fff;white-space:nowrap;width:32.5px;text-align:center">1</div>
<div style="left:483px;top:664.5px;height:22px;line-height:22px;font-size:18px;color:#727272;white-space:nowrap;width:21px;text-align:center">2</div>
<div style="left:510.5px;top:667px;width:1px;height:17px;background:#c4c4c4"></div>
<div style="left:521.5px;top:675.5px;width:2px;height:2px;background:#333;border-radius:1px"></div>
<div style="left:526.5px;top:675.5px;width:2px;height:2px;background:#333;border-radius:1px"></div>
<div style="left:531.5px;top:675.5px;width:2px;height:2px;background:#333;border-radius:1px"></div>
<svg style="left:546.5px;top:670.5px;" width="12" height="12" viewBox="0 0 12 12" fill="none"><path d="M6 1 V11 M1 6 H11" stroke="#222" stroke-width="1.7"/></svg>
<div style="left:606px;top:672px;width:2px;height:8px;background:#666"></div>
<svg style="left:619px;top:672.5px;" width="6" height="8" viewBox="0 0 6 8" fill="none"><path d="M5.5 0.5 V7.5 L0.5 4 Z" fill="#666"/></svg>
<div style="left:634.5px;top:672px;width:48.5px;height:8px;background:#d0d0d0;border-radius:4px"></div>
<svg style="left:848px;top:672.5px;" width="6" height="8" viewBox="0 0 6 8" fill="none"><path d="M0.5 0.5 V7.5 L5.5 4 Z" fill="#666"/></svg>
<div style="left:866px;top:672px;width:2px;height:8px;background:#666"></div>
<svg style="left:10px;top:693px;" width="17" height="15" viewBox="0 0 17 15" fill="none"><path d="M1.3 2.6 L2.9 6.8 L4.5 2.6 M5.9 2.6 V6.8 H7.5 A1.05 1.05 0 0 0 7.5 4.7 H5.9 M5.9 2.6 H7.3 A1.05 1.05 0 0 1 7.3 4.7" stroke="#333" stroke-width="1.05" stroke-linejoin="round"/><path d="M9.6 3.1 H14 A1.3 1.3 0 0 1 14 5.8 H13.4 M12.4 3.1 V13.3 H3.9 A1.6 1.6 0 0 1 3.9 10.1 H10.2 V13.3" stroke="#333" stroke-width="1.1" stroke-linejoin="round"/></svg>
<div style="left:38.5px;top:690px;width:1px;height:19px;background:#d0d0d0"></div>
<svg style="left:51px;top:693px;" width="17" height="15" viewBox="0 0 17 15" fill="none"><path d="M13.5 2.9 H3.2 A0.8 0.8 0 0 0 2.4 3.7 V12.5 A0.8 0.8 0 0 0 3.2 13.3 H7.1 M9.2 6.9 H14.9 M9.2 10.1 H14.9 M9.2 13.3 H14.9" stroke="#333" stroke-width="1.15"/></svg>
<svg style="left:439px;top:693px;" width="17" height="16" viewBox="0 0 17 16" fill="none"><rect x="1.5" y="1.5" width="12.5" height="11" rx="1" stroke="#333" stroke-width="1.1"/><path d="M1.5 5 H14 M1.5 8.5 H9 M5.5 5 V12.5" stroke="#333" stroke-width="1.1"/><circle cx="12.3" cy="11.8" r="2.7" stroke="#333" stroke-width="1.1" fill="#e5e5e5"/><circle cx="12.3" cy="11.8" r="0.9" fill="#333"/></svg>
<svg style="left:471px;top:694px;" width="18" height="13" viewBox="0 0 18 13" fill="none"><path d="M1 6.5 C4 1.5 14 1.5 17 6.5 C14 11.5 4 11.5 1 6.5 Z" stroke="#333" stroke-width="1.1"/><circle cx="9" cy="6.5" r="2.3" stroke="#333" stroke-width="1.1"/></svg>
<svg style="left:503px;top:692px;" width="17" height="17" viewBox="0 0 17 17" fill="none"><path d="M6.5 3.5 V2 H10.5 V3.5 M6.5 13.5 V15 H10.5 V13.5 M3.5 6.5 H2 V10.5 H3.5 M13.5 6.5 H15 V10.5 H13.5" stroke="#333" stroke-width="1.1"/><rect x="5.5" y="5.5" width="6" height="6" rx="1" stroke="#333" stroke-width="1.1"/><circle cx="8.5" cy="8.5" r="0.8" fill="#333"/></svg>
<svg style="left:526.0px;top:698.7px;" width="7" height="4.6" viewBox="0 0 7 4.6" fill="none"><path d="M1 1 L3.5 3.6 L6 1" stroke="#333" stroke-width="1.4" stroke-linecap="round" stroke-linejoin="round"/></svg>
<div style="left:557px;top:690px;width:22.5px;height:19px;background:#d3d3d3"></div>
<svg style="left:560.5px;top:693px;" width="17" height="15" viewBox="0 0 17 15" fill="none"><rect x="2.2" y="2.3" width="12.6" height="10.8" rx="1" stroke="#333" stroke-width="1.3"/><path d="M2.2 5.9 H14.8 M6.6 5.9 V13.1" stroke="#333" stroke-width="1.3"/></svg>
<svg style="left:592px;top:693px;" width="17" height="15" viewBox="0 0 17 15" fill="none"><rect x="2.4" y="2.3" width="12.4" height="10.8" rx="1" stroke="#333" stroke-width="1.15"/><path d="M8.6 2.3 V13.1" stroke="#333" stroke-width="1.15"/></svg>
<svg style="left:624px;top:693px;" width="17" height="15" viewBox="0 0 17 15" fill="none"><path d="M2.4 10.4 V13.2 H15 V1.8 H13.4" stroke="#333" stroke-width="1.15"/><rect x="2.4" y="1.8" width="10.2" height="7.4" rx="0.8" stroke="#333" stroke-width="1.15"/></svg>
<div style="left:652.5px;top:690px;width:1px;height:19px;background:#d0d0d0"></div>
<div style="left:668px;top:692.0px;height:17px;line-height:17px;font-size:13px;color:#222;white-space:nowrap;">100%</div>
<svg style="left:711.5px;top:698.7px;" width="7" height="4.6" viewBox="0 0 7 4.6" fill="none"><path d="M1 1 L3.5 3.6 L6 1" stroke="#333" stroke-width="1.4" stroke-linecap="round" stroke-linejoin="round"/></svg>
<div style="left:736.5px;top:699.5px;width:11.5px;height:2.2px;background:#222"></div>
<div style="left:761.5px;top:699.4px;width:54px;height:2.4px;background:#2b6fd6"></div>
<div style="left:815px;top:699.6px;width:52.5px;height:2px;background:#b8b8b8"></div>
<div style="left:810px;top:695.5px;width:10px;height:10px;background:#fff;border:1px solid #d5d5d5;border-radius:50%"><div style="left:2px;top:2px;width:4px;height:4px;border-radius:50%;background:#999"></div></div>
<svg style="left:881.6px;top:694.5px;" width="12" height="12" viewBox="0 0 12 12" fill="none"><path d="M6 1 V11 M1 6 H11" stroke="#222" stroke-width="2.1"/></svg>
<svg style="left:913px;top:693px;" width="15" height="15" viewBox="0 0 15 15" fill="none"><path d="M1.5 5 V1.5 H5 M10 1.5 H13.5 V5 M13.5 10 V13.5 H10 M5 13.5 H1.5 V10" stroke="#333" stroke-width="1.2" stroke-dasharray="0"/><path d="M9 6 L12.5 2.5 M6 9 L2.5 12.5" stroke="#333" stroke-width="1.2"/></svg>
</body></html>
